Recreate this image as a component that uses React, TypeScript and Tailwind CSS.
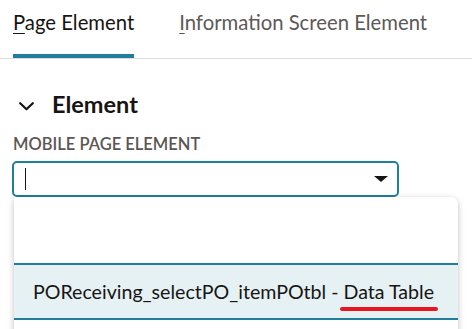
export default function App() {
  return (
    <div className="w-[472px] h-[329px] overflow-hidden bg-white font-['Lato',sans-serif] text-[#161513]">
      {/* Tabs */}
      <div className="flex h-[59px] border-b border-[#dedddb] pl-[13px]">
        <div className="relative pt-[9px] text-[20.3px] leading-[26px]">
          <span className="underline underline-offset-[3px] decoration-1">P</span>
          age Element
          <div className="absolute left-0 right-0 bottom-0 h-[4px] bg-[#227e9e]" />
        </div>
        <div className="ml-[45px] pt-[9px] text-[20.3px] leading-[26px] text-[#5c5958]">
          <span className="underline underline-offset-[3px] decoration-1">I</span>
          nformation Screen Element
        </div>
      </div>

      {/* Section header */}
      <div className="flex items-end pl-[19px] pt-[32px]">
        <svg width="15" height="9" viewBox="0 0 15 9" className="mb-[6px]">
          <polyline points="1.2,1.2 7.5,7.3 13.8,1.2" fill="none" stroke="#161513" strokeWidth="2.2" strokeLinecap="round" strokeLinejoin="round" />
        </svg>
        <span className="ml-[18px] text-[23.5px] leading-[26px] font-bold">Element</span>
      </div>

      {/* Label */}
      <div className="pl-[13px] pt-[17px] text-[16.5px] leading-[20px] font-semibold text-[#5b5653]">
        MOBILE PAGE ELEMENT
      </div>

      {/* Input */}
      <div className="ml-[12px] mt-[7px] w-[387px] h-[36px] border-2 border-[#227e9e] rounded-[5px] flex items-center pl-[11px] pr-[9px]">
        <div className="w-[1px] h-[22px] bg-[#161513]" />
        <div className="ml-auto w-0 h-0 border-l-[7px] border-r-[7px] border-t-[6px] border-l-transparent border-r-transparent border-t-[#161513]" />
      </div>

      {/* Dropdown */}
      <div className="ml-[14px] w-[444px] bg-white rounded-tr-[7px] shadow-[0_2px_6px_rgba(0,0,0,0.25)]">
        <div className="h-[66px]" />
        <div className="border-t-2 border-b-2 border-[#227e9e] bg-[#e6f1f4] h-[57px] pl-[19px] flex items-center">
          <span className="text-[19.6px] leading-[24px] text-[#161513]">
            POReceiving_selectPO_itemPOtbl -{" "}
            <span className="relative">
              Data Table
              <span className="absolute left-[-4px] right-[-4px] bottom-[-8px] h-[4px] rounded-full bg-[#e8161e]" />
            </span>
          </span>
        </div>
        <div className="h-[20px]" />
      </div>
    </div>
  );
}
